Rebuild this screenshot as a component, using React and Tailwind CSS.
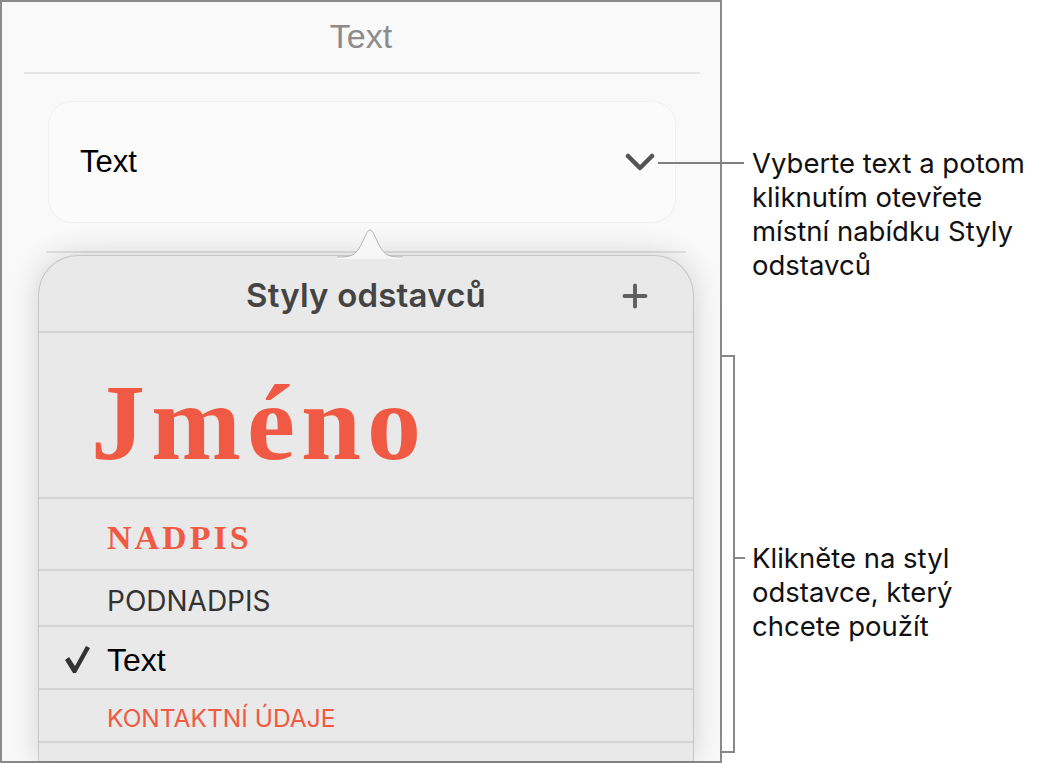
import { Plus } from 'lucide-react';

const UI = { fontFamily: 'Inter, "Liberation Sans", sans-serif' };
const HELV = { fontFamily: '"Liberation Sans", Arial, sans-serif' };
const SERIF = { fontFamily: '"Liberation Serif", "Times New Roman", serif' };

const Row = ({ className = '', children }) => (
  <div className={`flex items-center border-b-2 border-[#d3d3d3] shrink-0 ${className}`}>{children}</div>
);

const Check = () => (
  <svg width="26" height="28" viewBox="0 0 26 28" className="shrink-0">
    <path d="M1 14 L5 11 L11 20 L22 0 L26 2 L12 27 L9 27 Z" fill="#333" />
  </svg>
);

const Chevron = () => (
  <svg width="30" height="18" viewBox="0 0 30 18">
    <path d="M3 3 L15 15 L27 3" fill="none" stroke="#545454" strokeWidth="4.5" strokeLinecap="round" strokeLinejoin="round" />
  </svg>
);

const Arrow = () => (
  <svg width="66" height="32" viewBox="0 0 66 32" className="absolute left-[298px] -top-[29px]">
    <path d="M0 30 C14 30 18 29 24 18 C28 10 30 3 33 3 C36 3 38 10 42 18 C48 29 52 30 66 30 L66 32 L0 32 Z" fill="#f7f7f7" />
    <path d="M0 30 C14 30 18 29 24 18 C28 10 30 3 33 3 C36 3 38 10 42 18 C48 29 52 30 66 30" fill="none" stroke="#b5b5b5" strokeWidth="1" />
  </svg>
);

const Popover = () => (
  <div className="relative ml-[36px] w-[656px] flex-1 rounded-t-[40px] border border-b-0 border-[#c6c6c6] bg-[#e9e9e9] shadow-[0_0_30px_rgba(0,0,0,0.16)] flex flex-col">
    <Arrow />
    <Row className="h-[77px] justify-center relative">
      <span className="text-[33px] font-semibold text-[#444] tracking-[0.2px] pt-[4px]" style={UI}>Styly odstavců</span>
      <Plus size={36} strokeWidth={2.6} color="#5f5f5f" className="absolute right-[40px] top-[22px]" />
    </Row>
    <Row className="h-[166px] pl-[52px]">
      <span className="text-[108px] font-bold text-[#f05a44] leading-none pt-[16px] tracking-[6px]" style={SERIF}>Jméno</span>
    </Row>
    <Row className="h-[72px] pl-[68px]">
      <span className="text-[34px] font-bold text-[#f05a44] tracking-[3px] pt-[6px]" style={SERIF}>NADPIS</span>
    </Row>
    <Row className="h-[56px] pl-[68px]">
      <span className="text-[28px] text-[#333] pt-[6px]" style={UI}>PODNADPIS</span>
    </Row>
    <Row className="h-[63px] pl-[25px] gap-[17px] pt-[4px]">
      <Check />
      <span className="text-[32px] text-black" style={HELV}>Text</span>
    </Row>
    <Row className="h-[53px] pl-[68px]">
      <span className="text-[24.5px] text-[#f05a44] pt-[6px]" style={UI}>KONTAKTNÍ ÚDAJE</span>
    </Row>
    <div className="flex-1" />
  </div>
);

export default function App() {
  return (
    <div className="relative w-[1053px] h-[763px] bg-white overflow-hidden flex">
      <div className="w-[722px] h-[763px] border-2 border-[#8a8a8a] bg-[#f9f9f9] flex flex-col shrink-0">
        <div className="h-[70px] flex items-center justify-center shrink-0">
          <span className="text-[34px] text-[#8c8c8c] -mt-[2px]" style={HELV}>Text</span>
        </div>
        <div className="ml-[22px] mr-[20px] h-[2px] bg-[#e6e6e6] shrink-0" />
        <div className="ml-[46px] w-[628px] mt-[27px] h-[122px] shrink-0 rounded-[24px] bg-[#fbfbfb] border border-[#f1f1f1] flex items-center justify-between pl-[31px] pr-[20px]">
          <span className="text-[31px] text-black" style={HELV}>Text</span>
          <Chevron />
        </div>
        <div className="ml-[44px] w-[640px] mt-[28px] h-[2px] bg-[#e2e2e2] shrink-0" />
        <div className="h-[2px] shrink-0" />
        <Popover />
      </div>

      {/* callout 1 */}
      <div className="absolute left-[658px] top-[162px] w-[86px] h-[2px] bg-[#808080]" />
      <p className="absolute left-[752px] top-[146px] w-[300px] text-[27.5px] leading-[34px] text-[#111]" style={UI}>
        Vyberte text a potom kliknutím otevřete místní nabídku Styly odstavců
      </p>

      {/* callout 2 bracket */}
      <div className="absolute left-[722px] top-[355px] w-[13px] h-[398px] border-2 border-l-0 border-[#888]" />
      <div className="absolute left-[735px] top-[557px] w-[10px] h-[2px] bg-[#888]" />
      <p className="absolute left-[752px] top-[541px] w-[250px] text-[27.5px] leading-[34px] text-[#111]" style={UI}>
        Klikněte na styl odstavce, který chcete použít
      </p>
    </div>
  );
}
